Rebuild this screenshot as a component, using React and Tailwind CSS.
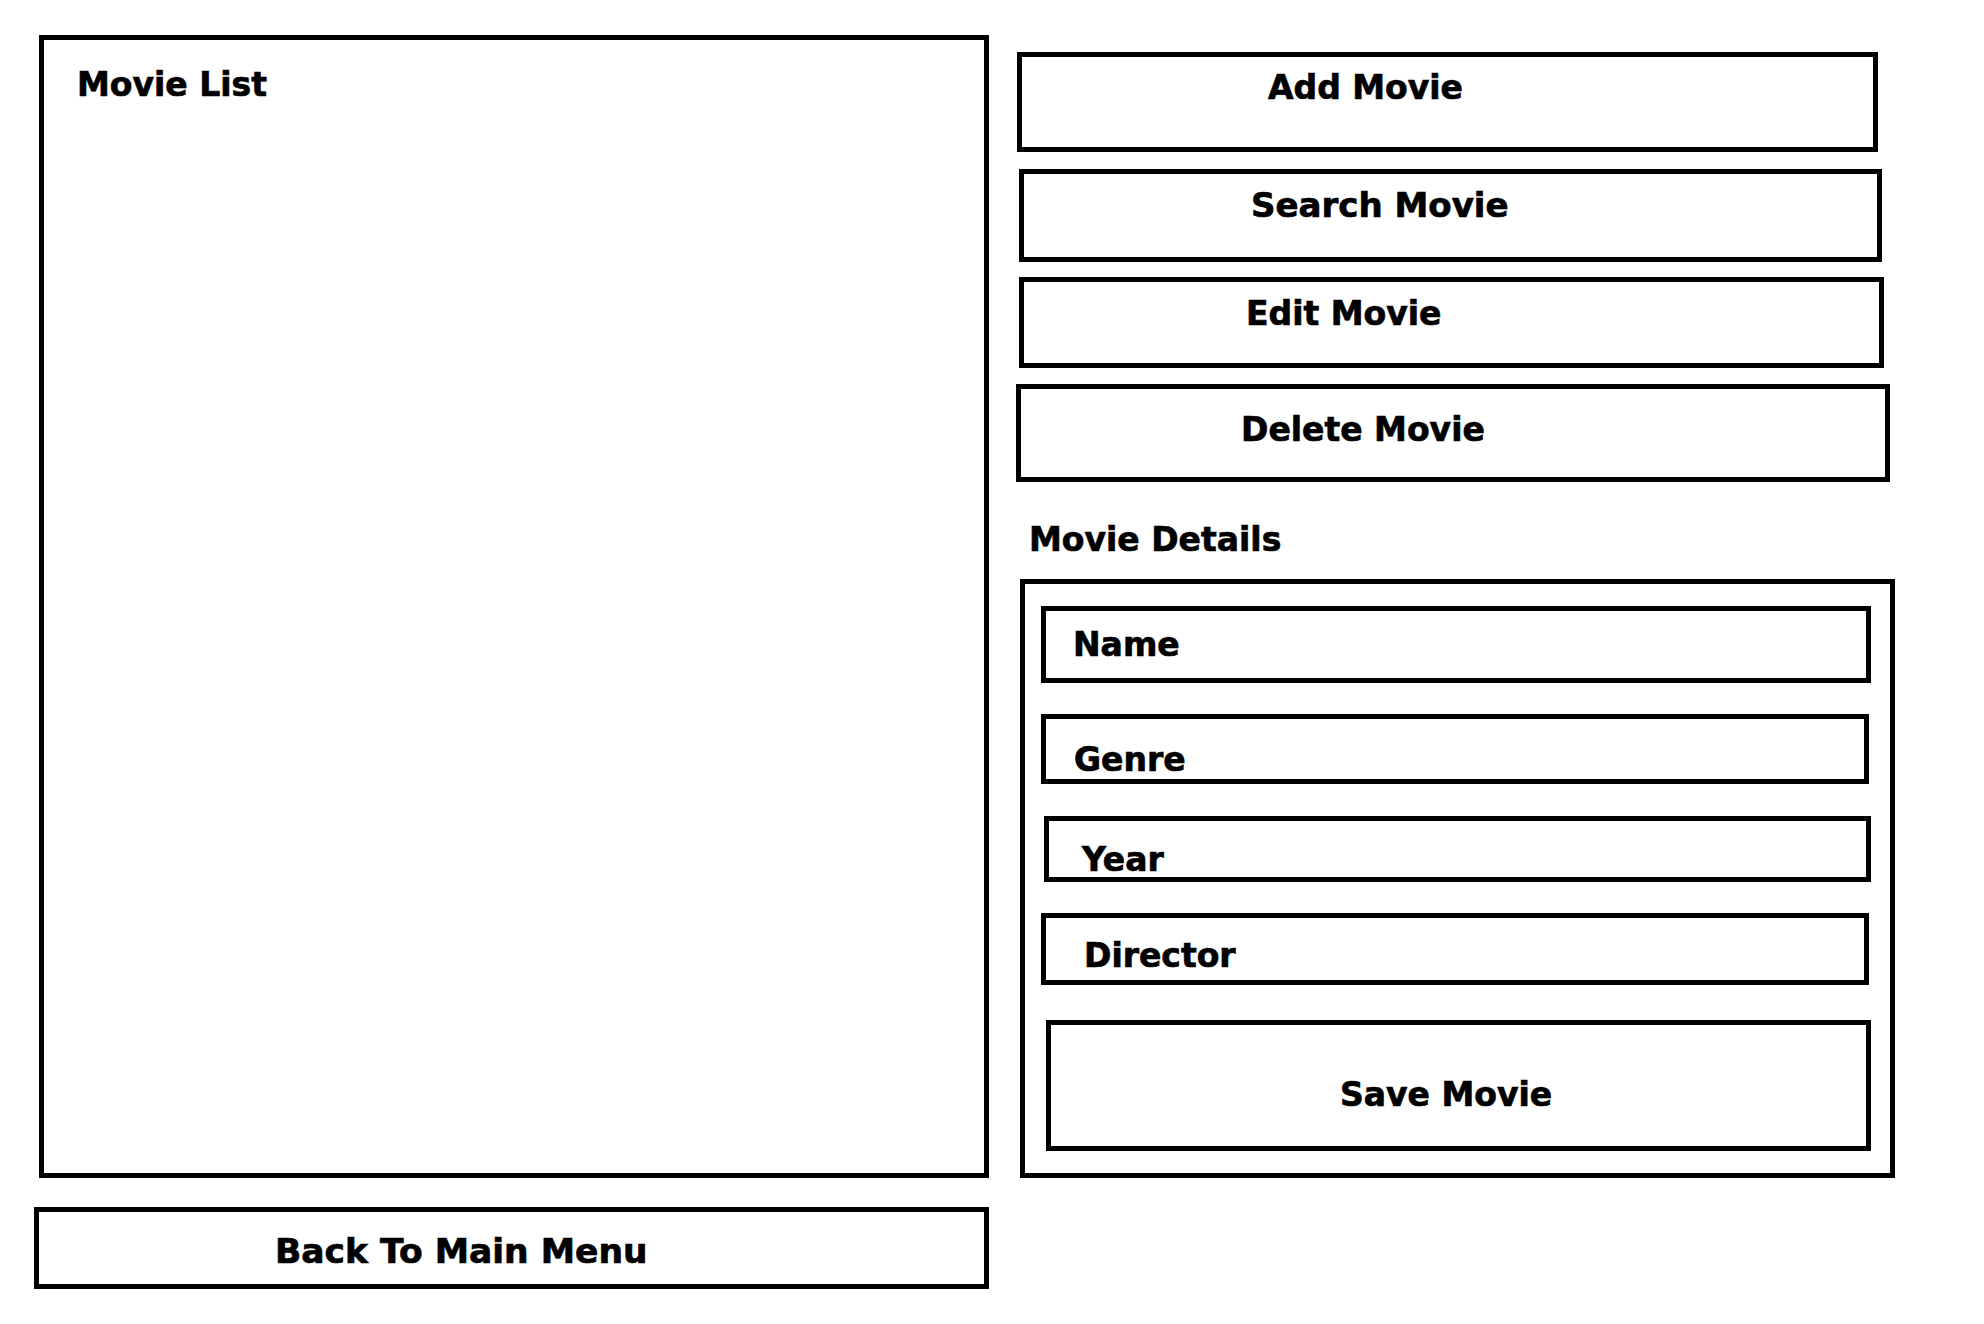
export default function App() {
  const box = "box-border border-[5px] border-black bg-white";
  const base = "font-['DejaVu_Sans',sans-serif] font-bold leading-none text-black whitespace-nowrap [-webkit-text-stroke:0.7px_black]";
  const txt = `${base} text-[33px]`;
  return (
    <div className="w-[1984px] h-[1324px] bg-white flex flex-row overflow-hidden">
      {/* Left column */}
      <div className="flex flex-col pl-[34px] pt-[35px] w-[989px] shrink-0">
        <div className={`${box} ml-[5px] w-[950px] h-[1143px] pl-[33px] pt-[28px]`}>
          <div className={txt}>Movie List</div>
        </div>
        <button className={`${box} mt-[29px] w-[955px] h-[82px] pl-[236px] pt-[22px] text-left flex items-start`}>
          <span className={`${base} text-[34.5px]`}>Back To Main Menu</span>
        </button>
      </div>

      {/* Right column */}
      <div className="flex flex-col ml-[27px] items-start">
        <button className={`${box} mt-[52px] ml-[1px] w-[861px] h-[100px] pl-[246px] pt-[14px] flex items-start`}>
          <span className={txt}>Add Movie</span>
        </button>
        <button className={`${box} mt-[17px] ml-[3px] w-[863px] h-[93px] pl-[227px] pt-[14px] flex items-start`}>
          <span className={`${base} text-[34px]`}>Search Movie</span>
        </button>
        <button className={`${box} mt-[15px] ml-[3px] w-[865px] h-[91px] pl-[222px] pt-[15px] flex items-start`}>
          <span className={txt}>Edit Movie</span>
        </button>
        <button className={`${box} mt-[16px] ml-0 w-[874px] h-[98px] pl-[220px] pt-[24px] flex items-start`}>
          <span className={txt}>Delete Movie</span>
        </button>

        <div className={`${txt} mt-[41px] ml-[13px]`}>Movie Details</div>

        <div className={`${box} mt-[23px] ml-[4px] w-[875px] h-[599px] flex flex-col items-start`}>
          <div className={`${box} mt-[22px] ml-[16px] w-[830px] h-[77px] pl-[27px] pt-[17px]`}>
            <div className={txt}>Name</div>
          </div>
          <div className={`${box} mt-[31px] ml-[16px] w-[828px] h-[70px] pl-[28px] pt-[24px]`}>
            <div className={txt}>Genre</div>
          </div>
          <div className={`${box} mt-[32px] ml-[19px] w-[827px] h-[66px] pl-[33px] pt-[22px]`}>
            <div className={txt}>Year</div>
          </div>
          <div className={`${box} mt-[31px] ml-[16px] w-[828px] h-[72px] pl-[38px] pt-[21px]`}>
            <div className={txt}>Director</div>
          </div>
          <button className={`${box} mt-[35px] ml-[21px] w-[825px] h-[131px] pl-[289px] pt-[53px] flex items-start`}>
            <span className={txt}>Save Movie</span>
          </button>
        </div>
      </div>
    </div>
  );
}
